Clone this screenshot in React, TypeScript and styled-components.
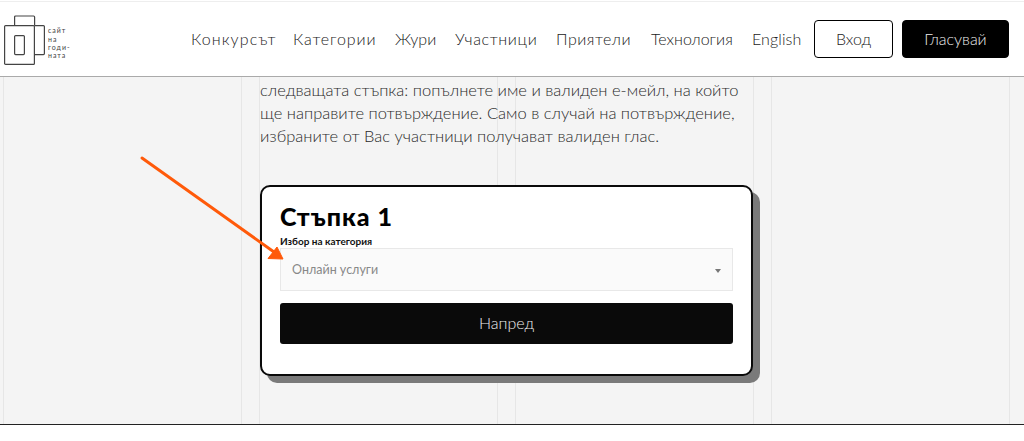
import styled, { createGlobalStyle } from 'styled-components';

const GlobalStyle = createGlobalStyle`
  html, body {
    margin: 0;
    padding: 0;
    background: #fff;
  }
  * {
    box-sizing: border-box;
  }
`;

const Page = styled.div`
  position: relative;
  width: 1024px;
  height: 441px;
  overflow: hidden;
  padding-top: 1px;
  font-family: 'Lato', 'Open Sans', sans-serif;
  color: #444;
`;

const Header = styled.header`
  position: relative;
  z-index: 2;
  display: flex;
  align-items: center;
  height: 76px;
  padding: 0 15px 0 4px;
  background: #fff;
  border-top: 1px solid #eee;
  border-bottom: 1px solid #aaa;
`;

const Logo = styled.div`
  display: flex;
  align-items: center;
  gap: 3px;
  margin-right: auto;
  padding-top: 2px;
`;

const LogoText = styled.div`
  width: 26px;
  font-size: 7px;
  letter-spacing: 1px;
  line-height: 8.4px;
  color: #444;
  padding-top: 6px;
`;

const LogoLine = styled.span`
  display: block;
  white-space: nowrap;
`;

const Nav = styled.nav`
  display: flex;
  align-items: center;
  margin-right: 12px;
  padding-bottom: 2px;
`;

const NavLink = styled.a<{ $w: number; $spacing: number }>`
  width: ${(p) => p.$w}px;
  font-size: 16px;
  font-weight: 300;
  letter-spacing: ${(p) => p.$spacing}px;
  color: #222;
  white-space: nowrap;
`;

const HeaderButton = styled.button<{ $dark?: boolean }>`
  height: 38px;
  width: ${(p) => (p.$dark ? 107 : 79)}px;
  margin-left: ${(p) => (p.$dark ? 9 : 0)}px;
  padding: 0 0 2px;
  border: 1px solid #000;
  border-radius: 4px;
  background: ${(p) => (p.$dark ? '#000' : '#fff')};
  color: ${(p) => (p.$dark ? '#eee' : '#222')};
  font-family: inherit;
  font-size: 16px;
  font-weight: 300;
`;

const Main = styled.main`
  height: 348px;
  overflow: hidden;
  padding-left: 260px;
  border-bottom: 1px solid #222;
  background-color: #f4f4f4;
  background-image:
    linear-gradient(to right, #e6e6e6 1px, transparent 1px),
    linear-gradient(to right, #e6e6e6 1px, transparent 1px);
  background-size: 256px 100%;
  background-repeat: repeat-x;
  background-position: 3px 0, 241px 0;
`;

const Intro = styled.p`
  width: 500px;
  margin: 2px 0 0;
  font-size: 16.5px;
  font-weight: 300;
  line-height: 23px;
  color: #2a2a2a;
`;

const IntroLine = styled.span`
  display: block;
  white-space: nowrap;
`;

const Card = styled.section`
  width: 493px;
  height: 191px;
  margin-top: 37px;
  padding: 17px 18px 0;
  background: #fff;
  border: 2px solid #0a0a0a;
  border-radius: 10px;
  box-shadow: 7px 7px 0 #7a7a7a;
`;

const Title = styled.h2`
  margin: 0;
  font-size: 25px;
  font-weight: 900;
  letter-spacing: 1px;
  line-height: 25px;
  color: #000;
`;

const Label = styled.label`
  display: block;
  margin-top: 6px;
  font-size: 10px;
  font-weight: 700;
  line-height: 13px;
  color: #111;
`;

const Select = styled.div`
  display: flex;
  align-items: center;
  justify-content: space-between;
  width: 453px;
  height: 43px;
  padding: 0 11px 0 11px;
  background: #fafafa;
  border: 1px solid #e8e8e8;
  font-size: 12.5px;
  color: #888;
`;

const Caret = styled.span`
  width: 0;
  height: 0;
  margin-top: 2px;
  border-left: 3.5px solid transparent;
  border-right: 3.5px solid transparent;
  border-top: 4px solid #777;
`;

const NextButton = styled.button`
  display: block;
  width: 453px;
  height: 41px;
  margin-top: 12px;
  padding: 0 0 2px;
  border: 0;
  border-radius: 3px;
  background: #0a0a0a;
  color: #eee;
  font-family: inherit;
  font-size: 16px;
  font-weight: 300;
`;

const Arrow = styled.svg`
  position: absolute;
  left: 0;
  top: 0;
  z-index: 3;
  pointer-events: none;
`;

const links: [string, number, number][] = [
  ['Конкурсът', 102, 1.1],
  ['Категории', 102, 0.9],
  ['Жури', 60, 0],
  ['Участници', 101, 0.65],
  ['Приятели', 95, 0.5],
  ['Технология', 101, 0],
  ['English', 50, 0.1],
];

function App() {
  return (
    <Page>
      <GlobalStyle />
      <Header>
        <Logo>
          <svg width="41" height="50" viewBox="0 0 41 50" fill="none" stroke="#444" strokeWidth="1.2">
            <rect x="0.6" y="10.6" width="29.8" height="38.8" rx="1" />
            <rect x="10.6" y="20.6" width="9.8" height="19" rx="1" />
            <path d="M10.6 10.6V2a1 1 0 0 1 1-1h18a1 1 0 0 1 1 1v8.6" />
            <path d="M30.4 10.6h9a1 1 0 0 1 1 1v27a1 1 0 0 1-1 1h-9" />
          </svg>
          <LogoText>
            <LogoLine>сайт</LogoLine>
            <LogoLine>на</LogoLine>
            <LogoLine>годи-</LogoLine>
            <LogoLine>ната</LogoLine>
          </LogoText>
        </Logo>
        <Nav>
          {links.map(([label, w, spacing]) => (
            <NavLink key={label} $w={w} $spacing={spacing}>{label}</NavLink>
          ))}
        </Nav>
        <HeaderButton>Вход</HeaderButton>
        <HeaderButton $dark>Гласувай</HeaderButton>
      </Header>
      <Main>
        <Intro>
          <IntroLine>следващата стъпка: попълнете име и валиден е-мейл, на който</IntroLine>
          <IntroLine>ще направите потвърждение. Само в случай на потвърждение,</IntroLine>
          <IntroLine>избраните от Вас участници получават валиден глас.</IntroLine>
        </Intro>
        <Card>
          <Title>Стъпка 1</Title>
          <Label>Избор на категория</Label>
          <Select>
            Онлайн услуги
            <Caret />
          </Select>
          <NextButton>Напред</NextButton>
        </Card>
      </Main>
      <Arrow width="1024" height="441" viewBox="0 0 1024 441" fill="none">
        <path d="M142 158L274 252" stroke="#ff5a0a" strokeWidth="3" strokeLinecap="round" />
        <path d="M283 259L268 258.5L277 247Z" fill="#ff5a0a" stroke="#ff5a0a" strokeLinejoin="round" />
      </Arrow>
    </Page>
  );
}

export default App;
